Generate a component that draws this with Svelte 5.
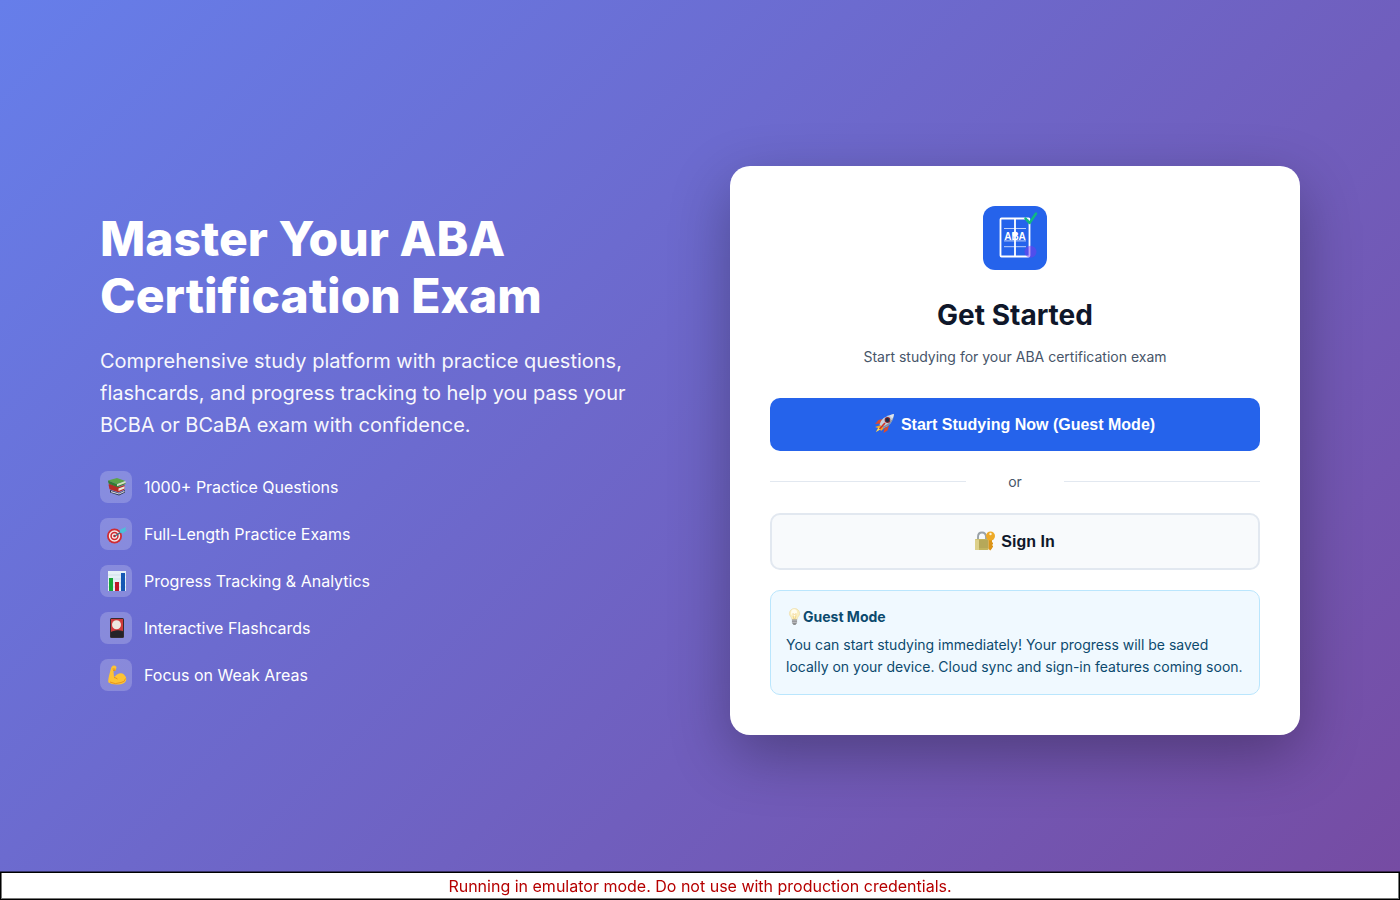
<script>
  const features = [
    { icon: 'books', label: '1000+ Practice Questions' },
    { icon: 'target', label: 'Full-Length Practice Exams' },
    { icon: 'chart', label: 'Progress Tracking & Analytics' },
    { icon: 'card', label: 'Interactive Flashcards' },
    { icon: 'arm', label: 'Focus on Weak Areas' }
  ];
</script>

{#snippet glyph(name)}
  <svg class="glyph" viewBox="0 0 20 20" aria-hidden="true">
    {#if name === 'books'}
      <path d="M3 13l9 3 6-3v2.500l-6 3L3 15.500z" fill="#28334d" />
      <path d="M4 14l8 2.500 5.500-2.700v1.200L12 17.500l-8-2.300z" fill="#d9dbe0" />
      <path d="M1.500 7.500L3 7l9 3 5.500-2v4.500l-6 2.700-9-3z" fill="#b52c25" />
      <path d="M11.500 11.500l6-2.200v2.200l-6 2.500z" fill="#eee7d9" />
      <path d="M1 3.500l9-2.500 8.500 3L10 7.300z" fill="#5ba349" />
      <path d="M1 3.500l9 3.800V10L1.500 6.500z" fill="#327c32" />
      <path d="M10 7.300L18.500 4v2.500L10 9.800z" fill="#d5e2c2" />
      <path d="M10 9.300l8.500-3.200v1L10 10.500z" fill="#3c7e34" />
    {:else if name === 'target'}
      <circle cx="7.500" cy="12" r="7.500" fill="#cf2c32" />
      <circle cx="7.500" cy="12" r="5.700" fill="#f5e9e8" />
      <circle cx="7.500" cy="12" r="4.200" fill="#ce2930" />
      <circle cx="7.500" cy="12" r="2.700" fill="#f5e9e8" />
      <circle cx="7.500" cy="12" r="1.300" fill="#be2029" />
      <path d="M8 12l8-5" stroke="#356e85" stroke-width="1.300" />
      <path d="M12.500 8.500l1-3L19 3l-.8 2.500 1.800.8-4 3z" fill="#4cc0d8" />
    {:else if name === 'chart'}
      <path d="M1 0h18v20H1z" fill="#e6f0f7" />
      <path d="M1 4h18M1 8h18M1 12h18M1 16h18" stroke="#bfd3e2" stroke-width=".6" />
      <path d="M2 7h4v13H2z" fill="#17a63a" />
      <path d="M8 11h4v9H8z" fill="#bd1728" />
      <path d="M14 2h4v18h-4z" fill="#1558b3" />
    {:else if name === 'card'}
      <rect x="3" width="14" height="20" rx="1.500" fill="#342c31" />
      <path d="M4 1h12v12q-6-2-12 1z" fill="#cf3a3b" />
      <circle cx="9.500" cy="6.700" r="4.500" fill="#eee7df" />
      <path d="M4 14q6-3 12 0v5H4z" fill="#252328" />
    {:else if name === 'arm'}
      <path d="M4.500 2Q7-.8 9.500 2l-.7 3.500-2.300.6L7 12l3-2.500q4-2.500 7 0 3 3 2 6.200-2 4-8 3.800-6 .5-9.500-2Q.5 16 3 7z" fill="#fdc334" />
      <path d="M3 17q5 3 11 .5 4-.5 4.500-4" fill="none" stroke="#e89422" stroke-width="1" />
      <path d="M7 12.500q2 .2 3.500 1.500M5.500 4l3 .2M6 5.500l2.500-.2" fill="none" stroke="#d98716" stroke-width=".8" />
    {:else if name === 'rocket'}
      <path d="M6 11l3 3-3 3-1-2-4 3 2-4-3-1z" fill="#f7a823" />
      <path d="M4 13l-3 5 5-3z" fill="#ffe05b" />
      <path d="M8 5L3.500 6 0 10l6-.5zM14 11.500l-1.500 5-4 2.500 1-5z" fill="#d94a31" />
      <path d="M4.500 10.500Q7 2 19 0q-1 11-10.500 14z" fill="#c5d0dd" />
      <path d="M14.500 1.300L19 0l-1.300 5z" fill="#dfe6ee" />
      <path d="M7 12.700Q15 10 18.500 3q-2 8-10 11z" fill="#8291a4" />
      <circle cx="12.500" cy="6" r="2.900" fill="#8c2630" />
      <circle cx="12.400" cy="6" r="1.900" fill="#142b48" />
      <path d="M4.500 15L10 9" stroke="#cf3128" stroke-width="1.700" />
    {:else if name === 'lock'}
      <path d="M3 9V6Q3 1.500 7 1.500T11 6v3" fill="none" stroke="#9aa2a7" stroke-width="1.900" />
      <rect y="8" width="13.500" height="11" rx="1" fill="#c2b45f" />
      <path d="M0 10h13.500M0 12h13.500M0 14h13.500M0 16h13.500" stroke="#9c8f4e" stroke-width=".6" />
      <path d="M0 8.500h4V19H0z" fill="#ddd08a" />
      <path d="M13.500 8.500h3.500v9l-1.700 2-1.800-1.500z" fill="#dc9418" />
      <circle cx="15.500" cy="5" r="4.500" fill="#eeaa28" />
      <circle cx="15.500" cy="3" r="1.200" fill="#fff3d5" />
      <path d="M16.500 11.500h1.500v2h-1.500zm0 3h1.500v2h-1.500z" fill="#dc9418" />
    {:else}
      <path d="M4 6a6 6 0 0 1 12 0c0 3-3 4-3 7H7c0-3-3-4-3-7z" fill="#fbf0bf" stroke="#ead9a0" stroke-width=".7" />
      <ellipse cx="9.500" cy="5" rx="3.500" ry="4" fill="#fffdf0" />
      <path d="M8 6l1 6h2l1-6-2 1z" fill="none" stroke="#ecc86e" stroke-width=".7" />
      <path d="M7 13h6v4l-2 2.500H9L7 17z" fill="#8c8e90" />
      <path d="M7 14.500h6M7 16.500h6" stroke="#d4d5d6" stroke-width=".7" />
    {/if}
  </svg>
{/snippet}

<div class="page">
  <main>
    <section class="intro">
      <h1>Master Your ABA Certification Exam</h1>
      <p class="lead">Comprehensive study platform with practice questions, flashcards, and progress tracking to help you pass your BCBA or BCaBA exam with confidence.</p>
      <ul>
        {#each features as feature}
          <li><span class="tile">{@render glyph(feature.icon)}</span>{feature.label}</li>
        {/each}
      </ul>
    </section>

    <section class="panel">
      <svg class="logo" viewBox="0 0 64 64" role="img" aria-label="ABA">
        <rect width="64" height="64" rx="12" fill="#2563eb" />
        <rect x="17.500" y="12.500" width="29" height="38" rx="1" fill="none" stroke="#fff" stroke-width="1.800" />
        <path d="M21 22.500h22M21 34.900h22M21 40.700h22" stroke="#fff" stroke-opacity=".7" stroke-width="1" />
        <path d="M32 12.500v38" stroke="#fff" stroke-width="1.800" />
        <circle cx="32" cy="28" r="2.500" fill="#fff" />
        <text x="32" y="33.500" text-anchor="middle">ABA</text>
        <circle cx="47.500" cy="45.700" r="6" fill="#7c3aed" fill-opacity=".5" />
        <path d="M42.500 12.500l4 4.500 6.500-9.500" fill="none" stroke="#10b981" stroke-width="2.500" stroke-linecap="round" stroke-linejoin="round" />
      </svg>
      <h2>Get Started</h2>
      <p class="subtitle">Start studying for your ABA certification exam</p>
      <button class="primary" type="button">{@render glyph('rocket')}Start Studying Now (Guest Mode)</button>
      <div class="divider"><span>or</span></div>
      <button class="secondary" type="button">{@render glyph('lock')}Sign In</button>
      <aside>
        <h3>{@render glyph('bulb')}Guest Mode</h3>
        <p>You can start studying immediately! Your progress will be saved locally on your device. Cloud sync and sign-in features coming soon.</p>
      </aside>
    </section>
  </main>
  <p class="warning">Running in emulator mode. Do not use with production credentials.</p>
</div>

<style>
  :global(body) { margin: 0; }
  .page, .page * { box-sizing: border-box; }
  .page {
    min-height: 100vh;
    display: grid;
    place-items: center;
    padding: 40px;
    background: linear-gradient(135deg, #667eea 0%, #764ba2 100%);
    font-family: Inter, sans-serif;
    font-size: 16px;
    line-height: 24px;
    color: #fff;
  }
  h1, h2, h3, p, ul { margin: 0; }
  main {
    width: 100%;
    max-width: 1200px;
    display: grid;
    grid-template-columns: 1fr 1fr;
    gap: 60px;
    align-items: center;
  }
  h1 { font-size: 48px; line-height: 57px; font-weight: 800; margin-bottom: 21px; }
  .lead { font-size: 20px; line-height: 32px; margin-bottom: 30px; opacity: 0.95; }
  ul { padding: 0; list-style: none; display: grid; gap: 15px; }
  li { display: flex; align-items: center; gap: 12px; }
  .tile {
    width: 32px;
    height: 32px;
    padding-left: 2px;
    border-radius: 8px;
    background: rgba(255, 255, 255, 0.2);
    display: grid;
    place-items: center;
  }
  .glyph { width: 20px; height: 20px; flex: none; }
  .panel {
    background: #fff;
    color: #0f172a;
    border-radius: 20px;
    padding: 40px;
    box-shadow: 0 20px 60px rgba(0, 0, 0, 0.3);
  }
  .logo { display: block; width: 64px; height: 64px; margin: 0 auto 24px; }
  .logo text { font: 700 10px "Liberation Sans", Arial, sans-serif; fill: #fff; }
  h2 { font-size: 28px; line-height: 42px; font-weight: 700; text-align: center; margin-bottom: 10px; }
  .subtitle { font-size: 14px; line-height: 22px; color: #475569; text-align: center; margin-bottom: 30px; }
  button {
    width: 100%;
    display: flex;
    align-items: center;
    justify-content: center;
    gap: 6px;
    border-radius: 10px;
    font: 600 16px/21px "Liberation Sans", Arial, sans-serif;
    padding: 16px;
  }
  .primary { background: #2563eb; border: 0; color: #fff; }
  .secondary { background: #f8fafc; border: 2px solid #e2e8f0; color: #0f172a; }
  .divider {
    display: flex;
    align-items: center;
    margin: 20px 0;
    font-size: 14px;
    line-height: 22px;
    color: #475569;
  }
  .divider::before, .divider::after { content: ""; flex: 1; height: 1px; background: #e2e8f0; }
  .divider span { width: 20%; text-align: center; }
  aside {
    margin-top: 20px;
    padding: 15px 15px 16px;
    border: 1px solid #bae6fd;
    border-radius: 10px;
    background: #f0f9ff;
    color: #0c4a6e;
    font-size: 14px;
    line-height: 22px;
  }
  h3 { display: flex; align-items: center; font-size: 14px; line-height: 22px; margin-bottom: 6px; }
  h3 .glyph { width: 17px; height: 18px; }
  .warning {
    position: fixed;
    bottom: 0;
    left: 0;
    width: 100%;
    border: 1px solid #000;
    box-shadow: 0 -1px rgba(0, 0, 0, 0.5), inset 1px 0 #777, inset -1px -1px #777;
    background: #fff;
    color: #b50000;
    text-align: center;
    line-height: 26px;
  }
</style>
